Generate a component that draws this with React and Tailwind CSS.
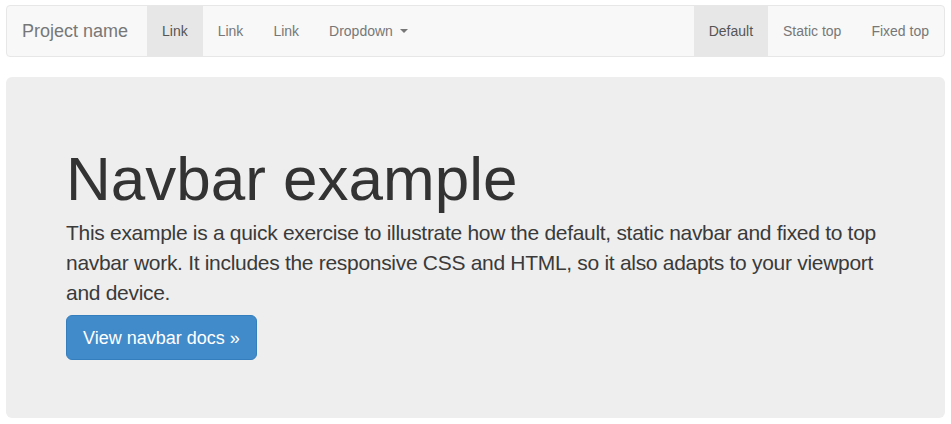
export default function App() {
  const font = { fontFamily: '"Liberation Sans", Arial, sans-serif' };
  return (
    <div className="min-h-[424px] bg-white px-[6px] pt-[5px]" style={font}>
      <nav className="flex h-[52px] items-stretch justify-between rounded-[4px] border border-[#e7e7e7] bg-[#f8f8f8]">
        <div className="flex items-stretch">
          <a className="flex w-[140px] items-center px-[15px] text-[18px] leading-[20px] text-[#777]">Project name</a>
          <a className="flex items-center bg-[#e7e7e7] px-[15px] text-[14px] leading-[20px] text-[#555]">Link</a>
          <a className="flex items-center px-[15px] text-[14px] leading-[20px] text-[#777]">Link</a>
          <a className="flex items-center px-[15px] text-[14px] leading-[20px] text-[#777]">Link</a>
          <a className="flex items-center px-[15px] text-[14px] leading-[20px] text-[#777]">
            Dropdown
            <span className="ml-[7px] inline-block h-0 w-0 border-x-[4px] border-t-[4px] border-x-transparent border-t-[#777]" />
          </a>
        </div>
        <div className="flex items-stretch">
          <a className="flex items-center bg-[#e7e7e7] px-[15px] text-[14px] leading-[20px] text-[#555]">Default</a>
          <a className="flex items-center px-[15px] text-[14px] leading-[20px] text-[#777]">Static top</a>
          <a className="flex items-center px-[15px] text-[14px] leading-[20px] text-[#777]">Fixed top</a>
        </div>
      </nav>
      <div className="mt-[20px] rounded-[6px] bg-[#eee] px-[60px] pt-[48px] pb-[49px]">
        <h1 className="mt-[20px] text-[62px] leading-[68px] text-[#333]">Navbar example</h1>
        <p className="mt-[5px] whitespace-nowrap text-[21px] leading-[30px] tracking-[-0.3px] text-[#3a3a3a]">
          This example is a quick exercise to illustrate how the default, static navbar and fixed to top
          <br />
          navbar work. It includes the responsive CSS and HTML, so it also adapts to your viewport
          <br />
          and device.
        </p>
        <div className="mt-[7px] mb-[9px] flex">
          <a className="flex h-[45px] items-center rounded-[6px] border border-[#357ebd] bg-[#428bca] px-[16px] text-[18px] leading-[24px] text-white">
            View navbar docs »
          </a>
        </div>
      </div>
    </div>
  );
}
